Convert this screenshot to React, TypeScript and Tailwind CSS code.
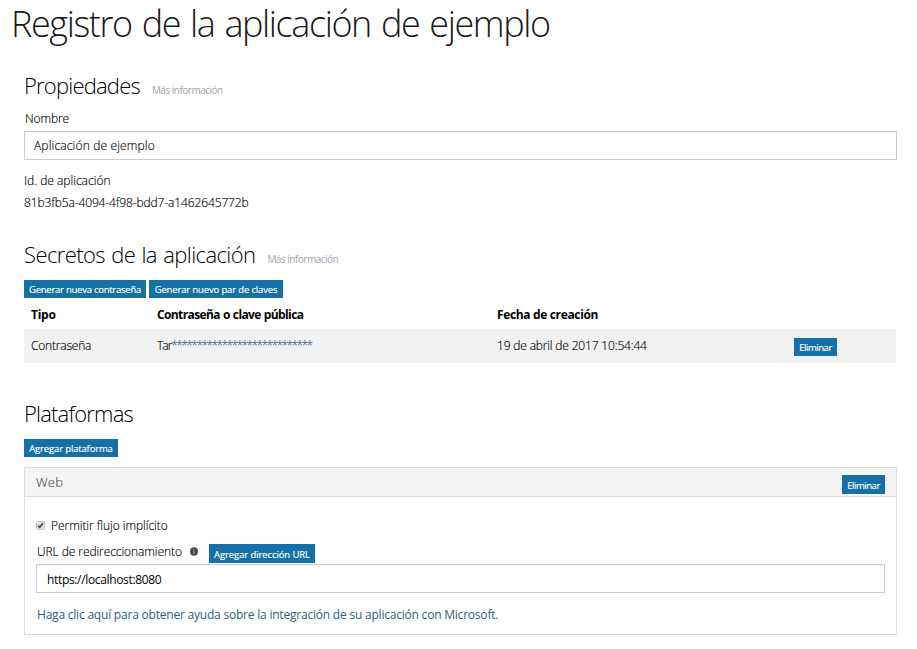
import type { ReactNode } from "react";

function Heading({ children, more, className }: { children: ReactNode; more?: boolean; className: string }) {
  return (
    <div className="flex h-7 items-baseline leading-7">
      <h2 className={`text-[22px] font-light whitespace-nowrap [-webkit-text-stroke:0px] ${className}`}>{children}</h2>
      {more && (
        <a className="ml-3 text-[10px] font-normal tracking-[-0.5px] whitespace-nowrap text-[#a3a3b1] [-webkit-text-stroke:0px]">
          Más información
        </a>
      )}
    </div>
  );
}

function Button({ children, className }: { children: ReactNode; className: string }) {
  return (
    <button
      className={`flex shrink-0 items-center justify-center bg-[#1570a6] text-[9.5px] font-normal whitespace-nowrap text-white ${className}`}
    >
      {children}
    </button>
  );
}

function Field({ value, className }: { value: string; className: string }) {
  return (
    <div className={`flex h-[29px] items-center border border-[#cccccc] shadow-[inset_0_1px_1px_rgba(0,0,0,0.06)] ${className}`}>
      {value}
    </div>
  );
}

export default function App() {
  return (
    <main className="h-[649px] w-[917px] overflow-hidden bg-white font-['Open_Sans','Noto_Sans',sans-serif] text-[12px] leading-[18px] font-light whitespace-nowrap text-black [-webkit-text-stroke:0.15px]">
      <h1 className="h-12 pl-[11px] text-[36px] leading-[48px] font-light tracking-[-1.4px] text-[#181818] [-webkit-text-stroke:0px] [word-spacing:2px]">
        Registro de la aplicación de ejemplo
      </h1>

      <section className="pt-[23px] pr-5 pl-6">
        <Heading more className="tracking-[-0.8px]">Propiedades</Heading>
        <div className="mt-[11px] pl-px tracking-[-0.1px]">Nombre</div>
        <Field value="Aplicación de ejemplo" className="mt-[3px] pl-[9px] tracking-[0.15px]" />
        <div className="mt-3">Id. de aplicación</div>
        <div className="mt-1 tracking-[-0.12px]">81b3fb5a-4094-4f98-bdd7-a1462645772b</div>
      </section>

      <section className="pt-7 pr-5 pl-6">
        <Heading more className="tracking-[-0.6px] [word-spacing:1.2px]">Secretos de la aplicación</Heading>
        <div className="mt-3 flex gap-[3px]">
          <Button className="h-[18px] w-[122px] pt-px tracking-[-0.25px]">Generar nueva contraseña</Button>
          <Button className="h-[18px] w-[134px] pt-px tracking-[-0.15px]">Generar nuevo par de claves</Button>
        </div>
        <div className="grid h-[31px] grid-cols-[126px_340px_297px_1fr] items-center pt-[3px] pl-[7px] font-bold [-webkit-text-stroke:0px]">
          <div className="tracking-[-0.25px]">Tipo</div>
          <div className="tracking-[-0.62px] [word-spacing:0.6px]">Contraseña o clave pública</div>
          <div className="tracking-[-0.35px]">Fecha de creación</div>
        </div>
        <div className="mr-px grid h-[34px] grid-cols-[126px_340px_297px_1fr] items-center bg-[#f1f1f1] pl-[7px]">
          <div className="tracking-[-0.2px]">Contraseña</div>
          <div>
            <span className="tracking-[-1px]">Tar</span>
            <span className="tracking-[-1.6px] text-[#4a6580]">****************************</span>
          </div>
          <div className="tracking-[-0.17px]">19 de abril de 2017 10:54:44</div>
          <Button className="mt-[2px] h-[18px] w-[43px] pt-px tracking-[-0.45px]">Eliminar</Button>
        </div>
      </section>

      <section className="pt-9 pr-5 pl-6">
        <Heading className="tracking-[-0.82px]">Plataformas</Heading>
        <Button className="mt-3 h-[18px] w-[94px] pt-px tracking-[-0.15px]">Agregar plataforma</Button>
        <div className="mt-[10px] h-[168px] border border-[#dddddd]">
          <div className="flex h-[29px] items-center justify-between border-b border-[#dddddd] bg-[#f4f4f4] pr-[11px] pl-[11px]">
            <span className="text-[13px] tracking-[0.2px] text-[#555555]">Web</span>
            <Button className="mt-[5px] h-[19px] w-[43px] pt-[3px] tracking-[-0.45px]">Eliminar</Button>
          </div>
          <div className="pt-5 pr-[11px] pl-[11px]">
            <label className="flex items-center gap-[6px] tracking-[-0.04px]">
              <svg className="-mt-px" width="9" height="9" viewBox="0 0 9 9" fill="none">
                <rect x="0.5" y="0.5" width="8" height="8" rx="1" fill="#e0e0e0" stroke="#c4c4c4" />
                <path d="M2 4.5 3.7 6.3 7 2.3" stroke="#444444" strokeWidth="1.5" />
              </svg>
              Permitir flujo implícito
            </label>
            <div className="mt-2 flex h-[21px] items-start">
              <span className="w-[153px] pl-px tracking-[-0.08px]">URL de redireccionamiento</span>
              <svg className="mt-1 ml-px" width="8" height="9" viewBox="0 0 8 9">
                <ellipse cx="4" cy="4.5" rx="4" ry="4.2" fill="#4a4a4a" />
                <path d="M4 2v1M4 4v3" stroke="#aaaaaa" />
              </svg>
              <Button className="mt-px ml-[11px] h-[19px] w-[106px] pt-[3px] tracking-[-0.1px]">Agregar dirección URL</Button>
            </div>
            <Field value="https://localhost:8080" className="pt-0.5 pl-[10px] font-normal tracking-[-0.34px] [-webkit-text-stroke:0px]" />
            <a className="mt-[13px] block pl-px font-normal tracking-[-0.21px] text-[#285f87] [-webkit-text-stroke:0px]">
              Haga clic aquí para obtener ayuda sobre la integración de su aplicación con Microsoft.
            </a>
          </div>
        </div>
      </section>
    </main>
  );
}
